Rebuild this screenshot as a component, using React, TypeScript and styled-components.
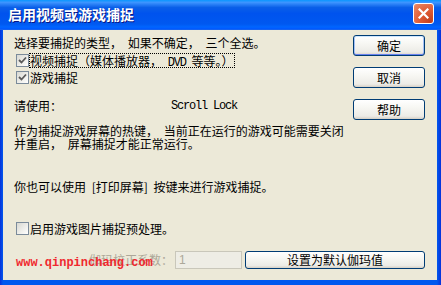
import React from 'react';
import styled, { createGlobalStyle, css } from 'styled-components';

const GlobalStyle = createGlobalStyle`
  html, body {
    margin: 0;
    padding: 0;
  }
  body {
    width: 441px;
    height: 285px;
    overflow: hidden;
    background: #0054e3;
    font-family: "Noto Sans CJK SC", "Liberation Sans", sans-serif;
  }
`;

const Window = styled.div`
  width: 441px;
  height: 285px;
  display: flex;
  flex-direction: column;
  background: linear-gradient(to right, #0831d9, #0058ee 3px, #0058ee 437px, #0831d9);
`;

const TitleBar = styled.div`
  height: 30px;
  flex: none;
  display: flex;
  justify-content: space-between;
  padding: 0 7px 0 8px;
  background: linear-gradient(
    to bottom,
    #0997ff 0%,
    #3d95ff 8%,
    #0a5fe8 25%,
    #0053ee 45%,
    #0058f0 80%,
    #0066ff 90%,
    #005bff 95%,
    #1f66e8 100%
  );
`;

const Title = styled.div`
  color: #ffffff;
  font-size: 14px;
  font-weight: bold;
  line-height: 14px;
  margin-top: 7px;
  text-shadow: 1px 1px #0a1883;
`;

const CloseButton = styled.div`
  width: 19px;
  height: 19px;
  margin-top: 3px;
  border: 1px solid #ffffff;
  border-radius: 3px;
  display: flex;
  align-items: center;
  justify-content: center;
  background: radial-gradient(circle at 85% 90%, #c4401d 0%, #df5a33 45%, #e9825f 90%, #f2a68a 100%);
`;

const Body = styled.div`
  flex: 1;
  margin: 0 4px 5px 3px;
  padding: 5px 12px 0 11px;
  background: #ece9d8;
  display: flex;
  flex-direction: column;
  font-size: 12px;
  line-height: 12px;
  color: #000000;
  word-spacing: 3px;
`;

const Top = styled.div`
  display: flex;
  justify-content: space-between;
`;

const LeftColumn = styled.div`
  padding-top: 2px;
  display: flex;
  flex-direction: column;
`;

const Line = styled.div<{ $gap?: number; $leading?: number }>`
  margin-top: ${(p) => p.$gap ?? 0}px;
  line-height: ${(p) => p.$leading ?? 12}px;
  white-space: nowrap;
`;

const HotkeyRow = styled.div<{ $gap?: number }>`
  margin-top: ${(p) => p.$gap ?? 0}px;
  display: flex;
  white-space: nowrap;
`;

const HotkeyLabel = styled.span`
  width: 157px;
`;

const Mono = styled.span`
  font-family: "Liberation Mono", "Noto Sans CJK SC", monospace;
  font-size: 12px;
  letter-spacing: -1.2px;
  word-spacing: 0;
`;

const CheckRow = styled.div<{ $gap?: number }>`
  margin-top: ${(p) => p.$gap ?? 0}px;
  margin-left: 2px;
  height: 17px;
  display: flex;
  align-items: center;
  white-space: nowrap;
`;

const Box = styled.span`
  width: 11px;
  height: 11px;
  border: 1px solid #7b8b9a;
  background: linear-gradient(135deg, #d8d8d2 0%, #f0f0ec 60%, #ffffff 100%);
  display: flex;
  align-items: center;
  justify-content: center;
  flex: none;
`;

const CheckLabel = styled.span<{ $focused?: boolean }>`
  margin-left: 0;
  padding: 0 1px 0 0;
  height: 13px;
  line-height: 13px;
  border: 1px dotted ${(p) => (p.$focused ? '#000000' : 'transparent')};
`;

const ButtonColumn = styled.div`
  display: flex;
  flex-direction: column;
  gap: 11px;
`;

const Button = styled.div<{ $default?: boolean; $width?: number; $height?: number }>`
  width: ${(p) => p.$width ?? 72}px;
  height: ${(p) => p.$height ?? 21}px;
  box-sizing: border-box;
  border: 1px solid #003c74;
  border-radius: 3px;
  display: flex;
  align-items: center;
  justify-content: center;
  font-size: 12px;
  color: #000000;
  background: linear-gradient(to bottom, #ffffff 0%, #f7f7f3 40%, #ecebe6 85%, #d6d0c5 100%);
  ${(p) =>
    p.$default &&
    css`
      box-shadow: inset 0 1px #cee7ff, inset 0 -1px #6982ee, inset 1px 0 #a4c0f5, inset -1px 0 #a4c0f5;
    `}
`;

const BottomRow = styled.div`
  position: relative;
  margin-top: 14px;
  height: 18px;
  display: flex;
  justify-content: flex-end;
  align-items: center;
`;

const GammaLabel = styled.span`
  color: #aca899;
  margin-right: 2px;
  white-space: nowrap;
`;

const GammaInput = styled.div`
  width: 67px;
  height: 18px;
  box-sizing: border-box;
  border: 1px solid #c9c7ba;
  background: #eeede5;
  color: #aca899;
  padding-left: 3px;
  font-family: "Liberation Sans", sans-serif;
  font-size: 12px;
  line-height: 16px;
  margin-right: 3px;
`;

const Watermark = styled.span`
  position: absolute;
  left: 2px;
  top: 5px;
  font-family: "Liberation Mono", monospace;
  font-size: 12px;
  line-height: 14px;
  font-weight: bold;
  color: #f0282e;
  word-spacing: 0;
  white-space: nowrap;
`;

const Check = () => (
  <svg width="9" height="9" viewBox="0 0 9 9">
    <path d="M1 4 L3.5 6.5 L8 1.5" fill="none" stroke="#5a5a5a" strokeWidth="1.8" />
  </svg>
);

const CloseX = () => (
  <svg width="11" height="11" viewBox="0 0 11 11">
    <path d="M1.5 1.5 L9.5 9.5 M9.5 1.5 L1.5 9.5" stroke="#ffffff" strokeWidth="2.2" strokeLinecap="square" />
  </svg>
);

export default function App() {
  return (
    <>
      <GlobalStyle />
      <Window>
        <TitleBar>
          <Title>启用视频或游戏捕捉</Title>
          <CloseButton>
            <CloseX />
          </CloseButton>
        </TitleBar>
        <Body>
          <Top>
            <LeftColumn>
              <Line>选择要捕捉的类型， 如果不确定， 三个全选。</Line>
              <CheckRow $gap={3}>
                <Box>
                  <Check />
                </Box>
                <CheckLabel $focused>
                  视频捕捉（媒体播放器， <Mono>DVD</Mono> 等等。）
                </CheckLabel>
              </CheckRow>
              <CheckRow>
                <Box>
                  <Check />
                </Box>
                <CheckLabel>游戏捕捉</CheckLabel>
              </CheckRow>
              <HotkeyRow $gap={14}>
                <HotkeyLabel>请使用：</HotkeyLabel>
                <Mono>Scroll Lock</Mono>
              </HotkeyRow>
              <Line $gap={12} $leading={13}>
                作为捕捉游戏屏幕的热键， 当前正在运行的游戏可能需要关闭
                <br />
                并重启， 屏幕捕捉才能正常运行。
              </Line>
              <Line $gap={31}>你也可以使用 [打印屏幕] 按键来进行游戏捕捉。</Line>
              <CheckRow $gap={27}>
                <Box />
                <CheckLabel>启用游戏图片捕捉预处理。</CheckLabel>
              </CheckRow>
            </LeftColumn>
            <ButtonColumn>
              <Button $default>确定</Button>
              <Button>取消</Button>
              <Button>帮助</Button>
            </ButtonColumn>
          </Top>
          <BottomRow>
            <Watermark>www.qinpinchang.com</Watermark>
            <GammaLabel>伽玛校正系数：</GammaLabel>
            <GammaInput>1</GammaInput>
            <Button $width={180} $height={18}>
              设置为默认伽玛值
            </Button>
          </BottomRow>
        </Body>
      </Window>
    </>
  );
}
